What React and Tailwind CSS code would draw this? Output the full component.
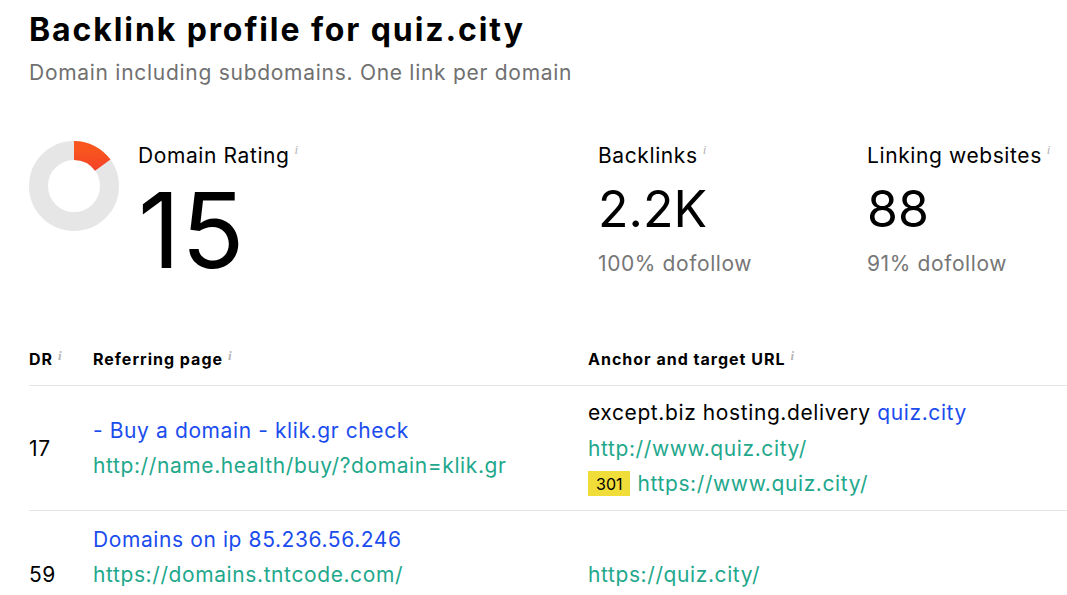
import React from "react";

const I = () => (
  <span className="ml-[5px] align-top text-[13px] italic leading-none tracking-normal text-[#b5b5b5]" style={{ fontFamily: "'Liberation Serif', serif" }}>i</span>
);

function Donut() {
  const r = 35.5;
  const c = 2 * Math.PI * r;
  const pct = 0.15;
  return (
    <svg width="90" height="90" viewBox="0 0 90 90" className="-mt-[2px] shrink-0">
      <defs>
        <linearGradient id="g" gradientUnits="userSpaceOnUse" x1="45" y1="0" x2="82" y2="0">
          <stop offset="0%" stopColor="#f2322f" />
          <stop offset="100%" stopColor="#f8561e" />
        </linearGradient>
      </defs>
      <circle cx="45" cy="45" r={r} fill="none" stroke="#e6e6e6" strokeWidth="19" />
      <circle
        cx="45"
        cy="45"
        r={r}
        fill="none"
        stroke="url(#g)"
        strokeWidth="19"
        strokeDasharray={`${c * pct} ${c}`}
        transform="rotate(-90 45 45)"
      />
    </svg>
  );
}

export default function App() {
  return (
    <div className="min-h-[595px] bg-white pl-[29px] pt-[10px] text-black" style={{ fontFamily: "Inter, 'Noto Sans', sans-serif" }}>
      <h1 className="text-[32px] font-bold leading-[40px] tracking-[1.9px]">Backlink profile for quiz.city</h1>
      <p className="mt-[10px] text-[21px] leading-[26px] tracking-[0.72px] text-[#707070]">Domain including subdomains. One link per domain</p>

      <div className="mt-[57px] flex">
        <div className="flex w-[569px] items-start gap-[19px]">
          <Donut />
          <div>
            <div className="text-[21px] leading-[26px] tracking-[0.6px]">Domain Rating<I /></div>
            <div className="mt-[9px] text-[104px] font-normal leading-[104px] tracking-[1px]">15</div>
          </div>
        </div>
        <div className="w-[269px]">
          <div className="text-[21px] leading-[26px] tracking-[0.6px]">Backlinks<I /></div>
          <div className="mt-[12px] text-[50px] leading-[56px]">2.2K</div>
          <div className="mt-[14px] text-[21px] leading-[26px] tracking-[0.6px] text-[#767676]">100% dofollow</div>
        </div>
        <div>
          <div className="text-[21px] leading-[26px] tracking-[0.6px]">Linking websites<I /></div>
          <div className="mt-[12px] text-[50px] leading-[56px]">88</div>
          <div className="mt-[14px] text-[21px] leading-[26px] tracking-[0.6px] text-[#767676]">91% dofollow</div>
        </div>
      </div>

      <div className="mt-[67px]">
        <div className="grid grid-cols-[64px_495px_1fr] border-b border-[#e5e5e5] pb-[16px] text-[16px] font-bold leading-[20px] tracking-[1px]">
          <div>DR<I /></div>
          <div>Referring page<I /></div>
          <div>Anchor and target URL<I /></div>
        </div>

        <div className="grid grid-cols-[64px_495px_1fr] border-b border-[#e5e5e5] pb-[8px] pt-[9px] text-[21px] leading-[35.5px] tracking-[0.6px]">
          <div className="flex items-center">17</div>
          <div className="flex flex-col justify-center">
            <div className="text-[#1b4cee]">- Buy a domain - klik.gr check</div>
            <div className="text-[#1fa88c]">http://name.health/buy/?domain=klik.gr</div>
          </div>
          <div>
            <div>except.biz hosting.delivery <span className="text-[#1b4cee]">quiz.city</span></div>
            <div className="text-[#1fa88c]">http://www.quiz.city/</div>
            <div className="flex items-center">
              <span className="mr-[7px] inline-flex h-[25px] items-center bg-[#f0dd3a] px-[8px] text-[16px] leading-none tracking-normal">301</span>
              <span className="text-[#1fa88c]">https://www.quiz.city/</span>
            </div>
          </div>
        </div>

        <div className="grid grid-cols-[64px_495px_1fr] pt-[11px] text-[21px] leading-[35.5px] tracking-[0.6px]">
          <div className="flex items-end">59</div>
          <div>
            <div className="text-[#1b4cee]">Domains on ip 85.236.56.246</div>
            <div className="text-[#1fa88c]">https://domains.tntcode.com/</div>
          </div>
          <div className="flex items-end text-[#1fa88c]">https://quiz.city/</div>
        </div>
      </div>
    </div>
  );
}
